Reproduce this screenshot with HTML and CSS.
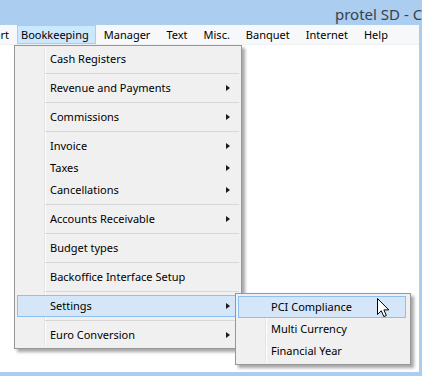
FILE: index.html
```html
<!DOCTYPE html>
<html lang="en">
<head>
    <meta charset="UTF-8">
    <title>protel SD</title>
    <link rel="stylesheet" href="styles.css">
</head>
<body>
    <div class="window">
        <div class="titlebar">
            <span class="title">protel SD - Cash Register</span>
        </div>

        <div class="frame">
            <div class="menubar">
                <span class="menu-item cut">Report</span>
                <span class="menu-item open">Bookkeeping</span>
                <span class="menu-item">Manager</span>
                <span class="menu-item">Text</span>
                <span class="menu-item">Misc.</span>
                <span class="menu-item">Banquet</span>
                <span class="menu-item">Internet</span>
                <span class="menu-item">Help</span>
            </div>

            <div class="workspace">
                <!-- Bookkeeping dropdown -->
                <div class="popup main-menu">
                    <div class="entry">Cash Registers</div>
                    <div class="sep"></div>
                    <div class="entry sub">Revenue and Payments</div>
                    <div class="sep"></div>
                    <div class="entry sub">Commissions</div>
                    <div class="sep"></div>
                    <div class="entry sub">Invoice</div>
                    <div class="entry sub">Taxes</div>
                    <div class="entry sub">Cancellations</div>
                    <div class="sep"></div>
                    <div class="entry sub">Accounts Receivable</div>
                    <div class="sep"></div>
                    <div class="entry">Budget types</div>
                    <div class="sep"></div>
                    <div class="entry">Backoffice Interface Setup</div>
                    <div class="sep"></div>
                    <div class="entry sub hot">Settings</div>
                    <div class="sep"></div>
                    <div class="entry sub">Euro Conversion</div>
                </div>

                <!-- Settings submenu -->
                <div class="popup settings-menu">
                    <div class="entry hot">PCI Compliance</div>
                    <div class="entry">Multi Currency</div>
                    <div class="entry">Financial Year</div>
                </div>

                <svg class="cursor" width="13" height="20" viewBox="0 0 13 20">
                    <path d="M0.5 0.5 L0.5 16.5 L4.3 12.8 L6.8 18.6 L9.3 17.5 L6.9 11.9 L11.8 11.9 Z"
                          fill="#fff" stroke="#000" stroke-width="1" stroke-linejoin="miter"/>
                </svg>
            </div>
        </div>
    </div>
</body>
</html>
```

FILE: styles.css
```css
body, html {
    margin: 0;
    padding: 0;
    height: 100%;
    overflow: hidden;
}

body {
    font-family: "Noto Sans", "Open Sans", sans-serif;
    font-size: 11px;
    color: #000;
}

.window {
    display: flex;
    flex-direction: column;
    height: 100%;
    background: #abcdef;
}

.titlebar {
    height: 25px;
    flex-shrink: 0;
    display: flex;
    align-items: center;
    overflow: hidden;
    white-space: nowrap;
}

.title {
    padding-left: 335px;
    font-size: 15px;
    color: #38414b;
    padding-top: 2px;
}

.frame {
    flex: 1;
    display: flex;
    flex-direction: column;
    margin: 0 3px 4px 0;
    background: #fff;
}

.menubar {
    height: 19px;
    display: flex;
    align-items: stretch;
    background: #f7f8f9;
    border-bottom: 1px solid #eef0f2;
    white-space: nowrap;
}

.menu-item {
    display: flex;
    align-items: center;
    padding: 0 7px;
    border: 1px solid transparent;
}

.menu-item.cut {
    margin-left: -34px;
    padding-right: 7px;
}

.menu-item.open {
    background: #cce8ff;
    border-color: #99d1ff;
    padding: 0 6px 0 3px;
}

.workspace {
    flex: 1;
    position: relative;
}

.popup {
    position: absolute;
    box-sizing: border-box;
    border: 1px solid #979797;
    padding: 2px 4px 2px 2px;
    background:
        linear-gradient(to right, transparent 29px, #e2e3e3 29px, #e2e3e3 30px, #fff 30px, #fff 31px, transparent 31px),
        #f0f0f0;
    background-clip: content-box, padding-box;
    box-shadow: 3px 3px 3px rgba(0, 0, 0, 0.35);
    white-space: nowrap;
}

.main-menu {
    left: 14px;
    top: 0;
    width: 228px;
}

.settings-menu {
    left: 235px;
    top: 248px;
    width: 176px;
    z-index: 2;
}

.entry {
    position: relative;
    box-sizing: border-box;
    height: 22px;
    line-height: 20px;
    padding-left: 32px;
    border: 1px solid transparent;
}

.entry.sub::after {
    content: "";
    position: absolute;
    right: 6px;
    top: 7px;
    border-left: 4px solid #1a1a1a;
    border-top: 3.5px solid transparent;
    border-bottom: 3.5px solid transparent;
}

.entry.hot {
    background: #d5e6f8;
    border-color: #8ebfef;
}

.sep {
    height: 7px;
    margin: 0 -2px 0 28px;
    background: linear-gradient(#d7d7d7, #d7d7d7) no-repeat 0 3px / 100% 1px;
}

.cursor {
    position: absolute;
    left: 377px;
    top: 253px;
    z-index: 3;
}
```
